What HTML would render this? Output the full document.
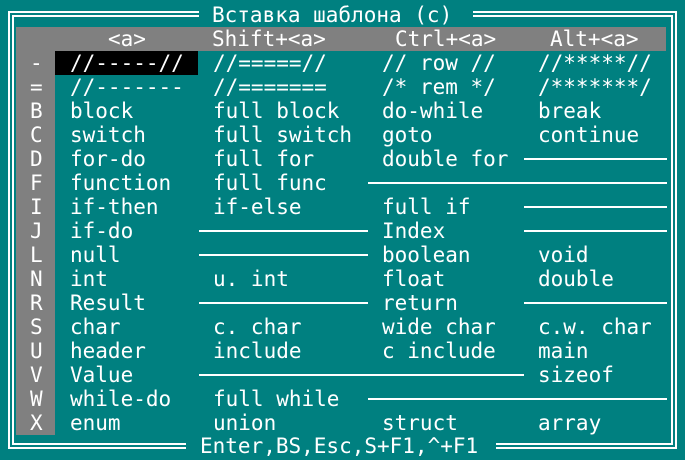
<!DOCTYPE html>
<html><head><meta charset="utf-8"><style>
*{margin:0;padding:0;box-sizing:border-box}
body{width:685px;height:460px;background:#008080;position:relative;overflow:hidden;font-family:"DejaVu Sans Mono","Liberation Mono","Noto Sans CJK SC",monospace;font-size:21px;color:#fff}
.l{position:absolute;background:#fff}
.t{position:absolute;line-height:24px;height:24px;white-space:pre}
</style></head><body>
<div style="position:absolute;left:16px;top:27px;width:650px;height:24px;background:#808080"></div>
<div style="position:absolute;left:16px;top:51px;width:39px;height:384px;background:#808080"></div>
<div style="position:absolute;left:55px;top:51px;width:143px;height:24px;background:#000"></div>
<div class="l" style="left:8px;top:11px;width:2px;height:438px"></div>
<div class="l" style="left:12px;top:15px;width:2px;height:430px"></div>
<div class="l" style="left:675px;top:11px;width:2px;height:438px"></div>
<div class="l" style="left:671px;top:15px;width:2px;height:430px"></div>
<div class="l" style="left:8px;top:11px;width:191px;height:2px"></div>
<div class="l" style="left:12px;top:15px;width:187px;height:2px"></div>
<div class="l" style="left:473px;top:11px;width:204px;height:2px"></div>
<div class="l" style="left:473px;top:15px;width:200px;height:2px"></div>
<div class="l" style="left:8px;top:447px;width:178px;height:2px"></div>
<div class="l" style="left:12px;top:443px;width:174px;height:2px"></div>
<div class="l" style="left:496px;top:447px;width:181px;height:2px"></div>
<div class="l" style="left:496px;top:443px;width:177px;height:2px"></div>
<div class="t" style="left:212px;top:3px">Вставка шаблона (с)</div>
<div class="t" style="left:200px;top:434px">Enter,BS,Esc,S+F1,^+F1</div>
<div class="t" style="left:108px;top:27px">&lt;a&gt;</div>
<div class="t" style="left:212px;top:27px">Shift+&lt;a&gt;</div>
<div class="t" style="left:395px;top:27px">Ctrl+&lt;a&gt;</div>
<div class="t" style="left:550px;top:27px">Alt+&lt;a&gt;</div>
<div class="t" style="left:30px;top:51px;height:auto;text-align:center;width:12px">-
=
B
C
D
F
I
J
L
N
R
S
U
V
W
X</div>
<div class="t" style="left:70px;top:51px;height:auto">//-----//
//-------
block
switch
for-do
function
if-then
if-do
null
int
Result
char
header
Value
while-do
enum</div>
<div class="t" style="left:213px;top:51px;height:auto">//=====//
//=======
full block
full switch
full for
full func
if-else


u. int

c. char
include

full while
union</div>
<div class="t" style="left:382px;top:51px;height:auto">// row //
/* rem */
do-while
goto
double for

full if
Index
boolean
float
return
wide char
c include


struct</div>
<div class="t" style="left:538px;top:51px;height:auto">//*****//
/*******/
break
continue




void
double

c.w. char
main
sizeof

array</div>
<div class="l" style="left:524px;top:158px;width:143px;height:2px"></div>
<div class="l" style="left:368px;top:182px;width:299px;height:2px"></div>
<div class="l" style="left:524px;top:206px;width:143px;height:2px"></div>
<div class="l" style="left:199px;top:230px;width:169px;height:2px"></div>
<div class="l" style="left:524px;top:230px;width:143px;height:2px"></div>
<div class="l" style="left:199px;top:254px;width:169px;height:2px"></div>
<div class="l" style="left:199px;top:302px;width:169px;height:2px"></div>
<div class="l" style="left:524px;top:302px;width:143px;height:2px"></div>
<div class="l" style="left:199px;top:374px;width:325px;height:2px"></div>
<div class="l" style="left:368px;top:398px;width:299px;height:2px"></div>
</body></html>
